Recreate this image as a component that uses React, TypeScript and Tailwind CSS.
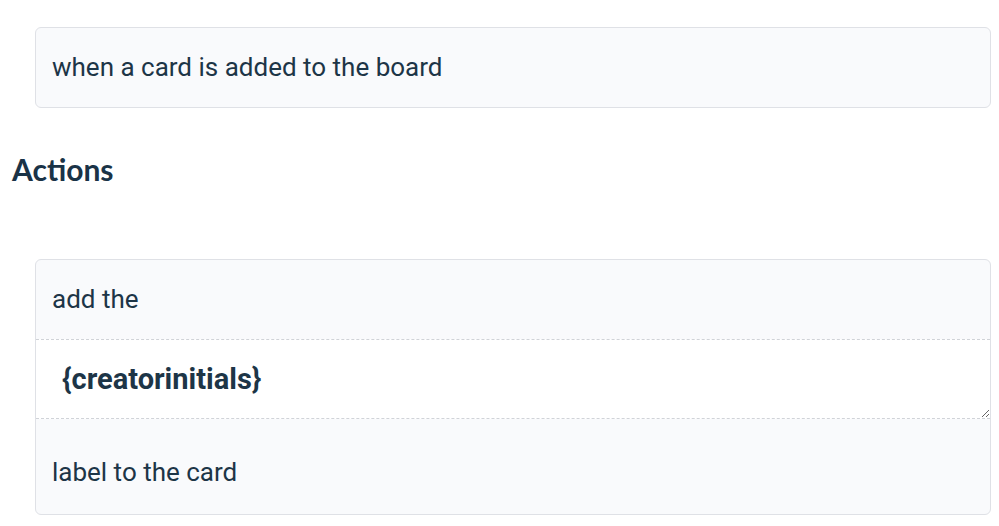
import * as React from "react";

const TEXT = "text-[#1d3547]";

function RuleRow({ children, className }: { children: React.ReactNode; className?: string }) {
  return (
    <div className={["flex items-center px-4 text-[26px]", TEXT, className || ""].join(" ")}>
      {children}
    </div>
  );
}

export default function App() {
  return (
    <div className="min-h-[526px] w-[999px] bg-white font-['Roboto',sans-serif]">
      <div className="pl-[35px] pr-[8px] pt-[27px]">
        <div className="h-[81px] rounded-md border border-[#dfe1e6] bg-[#f9fafc]">
          <RuleRow className="h-full">when a card is added to the board</RuleRow>
        </div>
      </div>

      <h2
        className={`mt-[42px] pl-[12px] font-['Lato',sans-serif] text-[30px] font-bold leading-[38px] text-[#1a3347]`}
      >
        Actions
      </h2>

      <div className="pl-[35px] pr-[8px] pt-[71px]">
        <div className="flex flex-col overflow-hidden rounded-md border border-[#dfe1e6] bg-[#f9fafc]">
          <RuleRow className="h-[79px]">add the</RuleRow>
          <textarea
            readOnly
            defaultValue="{creatorinitials}"
            className={`block h-[80px] w-full resize-y border-y border-dashed border-[#d0d3d8] bg-white px-[26px] py-[22px] text-[29px] font-bold leading-[34px] outline-none ${TEXT}`}
          />
          <RuleRow className="h-[95px] pt-[12px]">label to the card</RuleRow>
        </div>
      </div>
    </div>
  );
}
